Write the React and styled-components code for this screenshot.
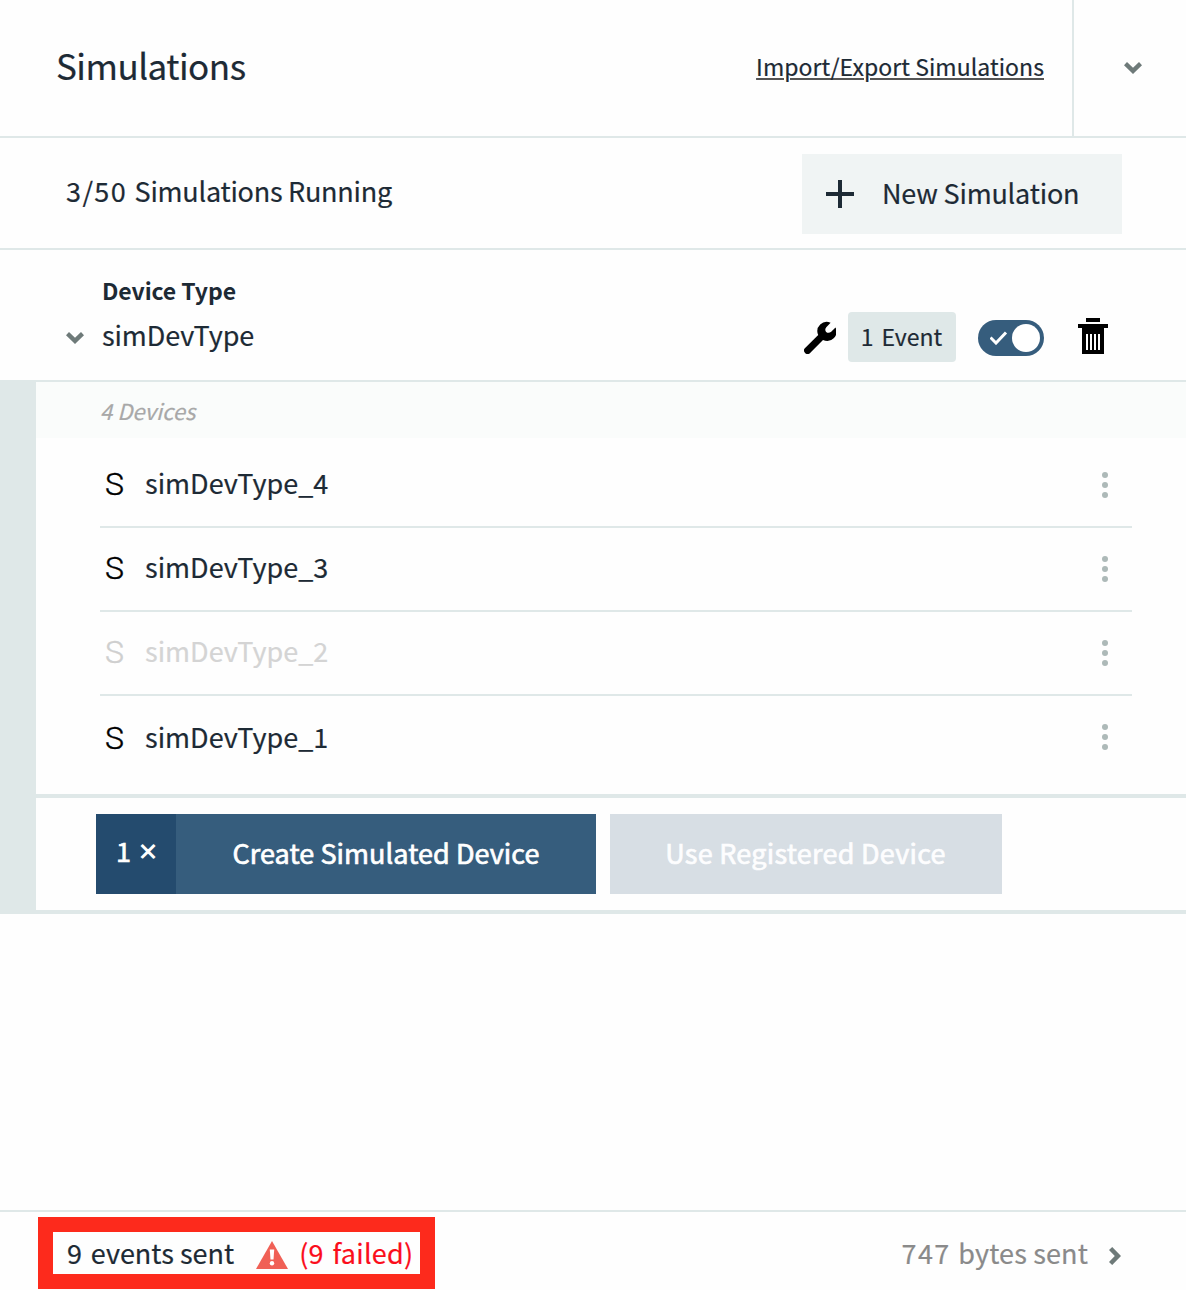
import React from 'react';
import styled, { createGlobalStyle } from 'styled-components';

const line = '#dfe8e8';
const ink = '#1d2a35';

const GlobalStyle = createGlobalStyle`
  * { box-sizing: border-box; }
  body {
    margin: 0;
    background: #fefefe;
    color: ${ink};
    font-family: "Noto Sans CJK JP", "Noto Sans", sans-serif;
    font-size: 27px;
    line-height: 40px;
    -webkit-text-stroke: 0.2px;
  }
  button { font: inherit; letter-spacing: inherit; border: 0; margin: 0; padding: 0; cursor: pointer; }
  svg { display: block; flex: none; }
`;

const Page = styled.main`
  display: flex;
  flex-direction: column;
  width: 1186px;
  height: 1290px;
  overflow: hidden;
`;

const Label = styled.span`
  letter-spacing: ${(p) => p.$track || 0}px;
  white-space: nowrap;
`;

const Digits = styled.span`
  letter-spacing: ${(p) => p.$track || 1.4}px;
`;

const Header = styled.header`
  display: flex;
  height: 138px;
  border-bottom: 2px solid ${line};
`;

const HeaderMain = styled.div`
  flex: 1;
  display: flex;
  align-items: center;
  justify-content: space-between;
  padding: 0 28px 6px 56px;
`;

const Title = styled.h1`
  margin: 0;
  font-weight: 400;
  font-size: 35px;
  letter-spacing: -0.5px;
`;

const TransferLink = styled.a`
  color: inherit;
  font-size: 23px;
  padding-top: 2px;
  letter-spacing: 0.06px;
  text-decoration: underline #555 2px;
  text-underline-offset: 2px;
`;

const Collapse = styled.button`
  width: 114px;
  border-left: 2px solid ${line};
  background: none;
  display: flex;
  align-items: center;
  justify-content: center;
  padding-left: 6px;
`;

const StatusBar = styled.section`
  display: flex;
  align-items: center;
  justify-content: space-between;
  height: 112px;
  padding: 2px 64px 0 66px;
  border-bottom: 2px solid ${line};
`;

const Running = styled.div`
  padding-bottom: 6px;
`;

const NewButton = styled.button`
  display: flex;
  align-items: center;
  gap: 28px;
  width: 320px;
  height: 80px;
  padding-left: 24px;
  background: #f0f4f4;
  color: ${ink};

  span { margin-bottom: 2px; }
`;

const TypeRow = styled.section`
  display: flex;
  height: 132px;
  padding: 20px 78px 0 66px;
  border-bottom: 2px solid ${line};
`;

const TypeInfo = styled.div`
  flex: 1;
  display: grid;
  grid-template-columns: 36px 1fr;
  grid-template-rows: 40px 50px;
  align-items: center;
  align-content: start;

  svg { margin-top: 5px; }
`;

const TypeCaption = styled.strong`
  grid-column: 2;
  font-size: 23px;
  letter-spacing: -0.1px;
  -webkit-text-stroke: 0;
`;

const Controls = styled.div`
  display: flex;
  align-items: center;
  height: 50px;
  margin-top: 42px;
`;

const EventBadge = styled.span`
  width: 108px;
  height: 50px;
  margin: 0 22px 0 12px;
  padding-right: 1px;
  border-radius: 4px;
  background: ${line};
  font-size: 23px;
  line-height: 48px;
  text-align: center;
`;

const Toggle = styled.button`
  display: flex;
  align-items: center;
  justify-content: space-between;
  width: 66px;
  height: 36px;
  margin: 2px 34px 0 0;
  padding: 0 4px 0 12px;
  border-radius: 18px;
  background: #365d7d;
`;

const Knob = styled.i`
  width: 28px;
  height: 28px;
  border-radius: 50%;
  background: #fff;
`;

const Panel = styled.section`
  height: 534px;
  margin-top: -2px;
  padding-top: 2px;
  border-left: 36px solid ${line};
  border-bottom: 4px solid ${line};
`;

const CountStrip = styled.div`
  height: 56px;
  padding: 8px 0 0 64px;
  background: #fafcfb;
  color: #a8a8a8;
  font-size: 22px;
  font-style: italic;
`;

const DeviceList = styled.ul`
  list-style: none;
  margin: 0;
  padding: 6px 54px 14px 64px;
`;

const DeviceRow = styled.li`
  display: flex;
  align-items: center;
  height: 84px;
  padding: 0 24px 0 5px;
  border-bottom: 2px solid ${line};
  color: ${(p) => (p.$off ? '#d4d4d4' : ink)};
  &:last-child { border-bottom-color: transparent; }
`;

const Mark = styled.span`
  width: 40px;
  padding-top: ${(p) => (p.$last ? 2 : 0)}px;
  margin-bottom: ${(p) => (p.$last ? 0 : 2)}px;
  color: ${(p) => (p.$off ? '#cfcfcf' : '#000')};
  font-family: Roboto, sans-serif;
  font-weight: 300;
  font-size: 32px;
  -webkit-text-stroke: 0.4px;
`;

const DeviceName = styled.span`
  flex: 1;
  margin-bottom: ${(p) => (p.$last ? 0 : 4)}px;
`;

const Actions = styled.div`
  display: flex;
  gap: 14px;
  padding: 16px 60px;
  border-top: 4px solid ${line};
  -webkit-text-stroke: 0.7px;
`;

const CreateGroup = styled.div`
  display: flex;
  width: 500px;
  height: 80px;
  color: #fff;
`;

const Quantity = styled.span`
  display: flex;
  align-items: center;
  gap: 9px;
  width: 80px;
  padding: 0 0 7px 20px;
  background: #244b6e;
`;

const Times = styled.span`
  font-size: 20px;
  padding-top: 1px;
  margin-left: -2px;
  -webkit-text-stroke: 1.4px;
`;

const CreateButton = styled.button`
  flex: 1;
  padding-bottom: 2px;
  background: #365d7d;
  color: inherit;
  letter-spacing: 0.06px;
`;

const RegisteredButton = styled.button`
  width: 392px;
  padding: 0 1px 2px 0;
  background: #d7dee4;
  color: #fdfdfe;
  letter-spacing: 0.26px;
`;

const Footer = styled.footer`
  display: flex;
  justify-content: space-between;
  height: 80px;
  margin-top: auto;
  padding: 5px 65px 0 38px;
  border-top: 2px solid ${line};
`;

const Highlight = styled.div`
  display: flex;
  align-items: center;
  width: 397px;
  height: 72px;
  padding-left: 14px;
  border: 15px solid #fd2a1c;

  svg { margin: 4px 11px 0 22px; }
`;

const Failed = styled.span`
  color: #fb0d1b;
  letter-spacing: 0.25px;
  white-space: nowrap;
`;

const Bytes = styled.div`
  display: flex;
  align-items: center;
  gap: 21px;
  color: #8a8a8a;

  span { margin-bottom: 1px; }
  svg { margin-top: 4px; }
`;

const Chevron = ({ right }) =>
  right ? (
    <svg width="12" height="18" viewBox="0 0 12 18" fill="#6e7a79">
      <path d="M3.200 0 12 9l-8.800 9L0 15 5.800 9 0 3z" />
    </svg>
  ) : (
    <svg width="18" height="12" viewBox="0 0 18 12" fill="#6e7a79">
      <path d="M0 3.200 3 0l6 5.800L15 0l3 3.200L9 12z" />
    </svg>
  );

const Plus = () => (
  <svg width="28" height="28" viewBox="0 0 28 28" fill={ink}>
    <path d="M12 0h4v12h12v4H16v12h-4V16H0v-4h12z" />
  </svg>
);

const Wrench = () => (
  <svg width="32" height="34" viewBox="0 -2 32 34">
    <path d="M26.600 .8 22.300 5.200C20.900 6.800 21 8.700 22.200 9.900S25.400 11.200 27.200 9.800L31.500 5.500A9.300 9.300 0 0 1 19 17.900L6.100 30.900A3.500 3.500 0 0 1 1.100 25.900L14.200 13A9.300 9.300 0 0 1 26.600 .8z" />
  </svg>
);

const Check = () => (
  <svg width="18" height="14" viewBox="0 0 18 14" fill="none" stroke="#fff" strokeWidth="3">
    <path d="M.5 6.500 6 12 16 1.500" />
  </svg>
);

const Trash = () => (
  <svg width="30" height="38" viewBox="0 0 30 38" shapeRendering="crispEdges">
    <path d="M8 0h14v4H8zM0 6h30v4h-4v26H4V10H0z" />
    <path fill="#fff" d="M8 16h2v16H8zM12 16h2v16h-2zM16 16h2v16h-2zM20 16h2v16h-2z" />
  </svg>
);

const Dots = () => (
  <svg width="6" height="26" viewBox="0 0 6 26" fill="#adb9b8">
    <circle cx="3" cy="3" r="3" />
    <circle cx="3" cy="13" r="3" />
    <circle cx="3" cy="23" r="3" />
  </svg>
);

const Warning = () => (
  <svg width="32" height="28" viewBox="0 0 32 28">
    <path fill="#f06056" d="M16 0 32 28H0z" />
    <path fill="#fff" d="M13.800 8.500h4.400l-.7 10h-3z" />
    <circle fill="#fff" cx="16" cy="22.300" r="2.200" />
  </svg>
);

const devices = [
  { name: 'simDevType_4' },
  { name: 'simDevType_3' },
  { name: 'simDevType_2', off: true },
  { name: 'simDevType_1' },
];

export default function App() {
  return (
    <>
      <GlobalStyle />
      <Page>
        <Header>
          <HeaderMain>
            <Title>Simulations</Title>
            <TransferLink>Import/Export Simulations</TransferLink>
          </HeaderMain>
          <Collapse><Chevron /></Collapse>
        </Header>
        <StatusBar>
          <Running>
            <Label $track={-0.25}><Digits>3/50 </Digits>Simulations Running</Label>
          </Running>
          <NewButton><Plus /><Label $track={-0.2}>New Simulation</Label></NewButton>
        </StatusBar>
        <TypeRow>
          <TypeInfo>
            <TypeCaption>Device Type</TypeCaption>
            <Chevron />
            <Label $track={-0.1}>simDevType</Label>
          </TypeInfo>
          <Controls>
            <Wrench />
            <EventBadge><Digits>1 </Digits>Event</EventBadge>
            <Toggle><Check /><Knob /></Toggle>
            <Trash />
          </Controls>
        </TypeRow>
        <Panel>
          <CountStrip><Label>4 Devices</Label></CountStrip>
          <DeviceList>
            {devices.map((d, i) => (
              <DeviceRow key={d.name} $off={d.off}>
                <Mark $off={d.off} $last={i === devices.length - 1}>S</Mark>
                <DeviceName $last={i === devices.length - 1}>{d.name}</DeviceName>
                <Dots />
              </DeviceRow>
            ))}
          </DeviceList>
          <Actions>
            <CreateGroup>
              <Quantity><span>1</span> <Times>×</Times></Quantity>
              <CreateButton>Create Simulated Device</CreateButton>
            </CreateGroup>
            <RegisteredButton>Use Registered Device</RegisteredButton>
          </Actions>
        </Panel>
        <Footer>
          <Highlight>
            <Label><Digits>9 </Digits>events sent</Label>
            <Warning />
            <Failed>(<Digits>9 </Digits>failed)</Failed>
          </Highlight>
          <Bytes>
            <Label $track={0.15}><Digits>747 </Digits>bytes sent</Label>
            <Chevron right />
          </Bytes>
        </Footer>
      </Page>
    </>
  );
}
